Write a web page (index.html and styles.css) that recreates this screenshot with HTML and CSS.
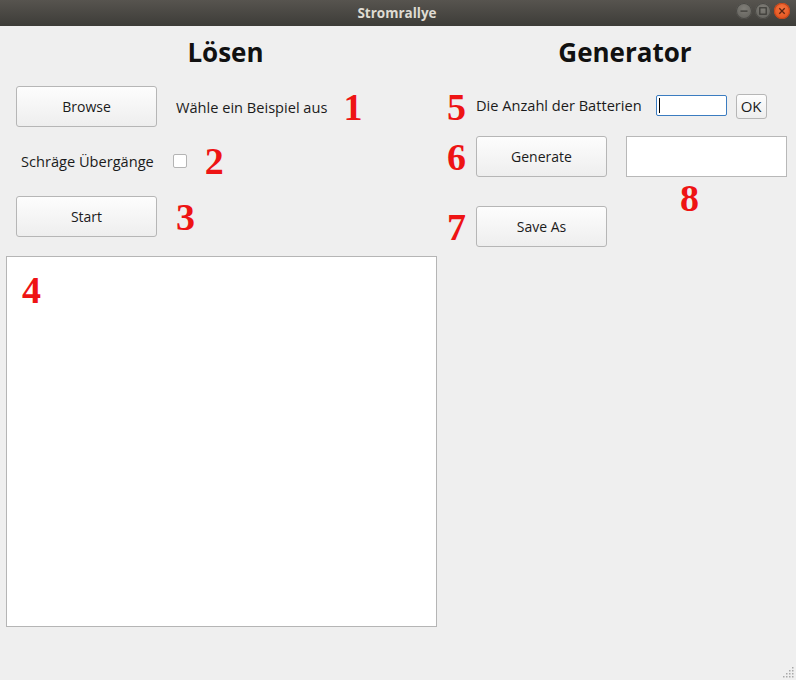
FILE: index.html
```html
<!DOCTYPE html>
<html lang="de">
<head>
<meta charset="utf-8">
<title>Stromrallye</title>
<link rel="stylesheet" href="styles.css">
</head>
<body>
<div class="window">
  <header class="titlebar">
    <span class="title">Stromrallye</span>
    <div class="winbtns">
      <span class="wbtn wmin"><svg width="16" height="16" viewBox="0 0 16 16"><rect x="4.5" y="7.5" width="7" height="1.2" fill="#3b3a36"/></svg></span>
      <span class="wbtn wmax"><svg width="16" height="16" viewBox="0 0 16 16"><rect x="4.8" y="4.8" width="6.4" height="6.4" fill="none" stroke="#3b3a36" stroke-width="1.2"/></svg></span>
      <span class="wbtn wclose"><svg width="16" height="16" viewBox="0 0 16 16"><path d="M5.3 5.3 L10.7 10.7 M10.7 5.3 L5.3 10.7" stroke="#5a2412" stroke-width="1.3"/></svg></span>
    </div>
  </header>
  <main class="content">
    <section class="col left">
      <h1 class="heading">Lösen</h1>
      <div class="row r1">
        <button class="btn wide">Browse</button>
        <span class="label">Wähle ein Beispiel aus</span>
        <span class="num">1</span>
      </div>
      <div class="row r2">
        <span class="label">Schräge Übergänge</span>
        <span class="check"></span>
        <span class="num">2</span>
      </div>
      <div class="row r3">
        <button class="btn wide">Start</button>
        <span class="num">3</span>
      </div>
      <div class="canvas"><span class="num">4</span></div>
    </section>
    <section class="col right">
      <h1 class="heading hr">Generator</h1>
      <div class="row r5">
        <span class="num">5</span>
        <span class="label">Die Anzahl der Batterien</span>
        <span class="input"><span class="caret"></span></span>
        <button class="btn ok">OK</button>
      </div>
      <div class="row r6">
        <span class="num">6</span>
        <button class="btn mid">Generate</button>
        <div class="outbox"><span class="num n8">8</span></div>
      </div>
      <div class="row r7">
        <span class="num">7</span>
        <button class="btn mid">Save As</button>
      </div>
    </section>
  </main>
  <svg class="grip" width="12" height="12" viewBox="0 0 12 12">
    <g fill="#a9a9a9">
      <rect x="9" y="0" width="1.5" height="1.5"/>
      <rect x="6" y="3" width="1.5" height="1.5"/><rect x="9" y="3" width="1.5" height="1.5"/>
      <rect x="3" y="6" width="1.5" height="1.5"/><rect x="6" y="6" width="1.5" height="1.5"/><rect x="9" y="6" width="1.5" height="1.5"/>
      <rect x="0" y="9" width="1.5" height="1.5"/><rect x="3" y="9" width="1.5" height="1.5"/><rect x="6" y="9" width="1.5" height="1.5"/><rect x="9" y="9" width="1.5" height="1.5"/>
    </g>
  </svg>
</div>
</body>
</html>
```

FILE: styles.css
```css
* { box-sizing: border-box; }
html, body { margin: 0; padding: 0; }
body {
  background: #efefef;
  font-family: "Open Sans", "DejaVu Sans", sans-serif;
  color: #1b1b1b;
}
.window {
  position: relative;
  width: 796px;
  height: 680px;
  display: flex;
  flex-direction: column;
  background: #efefef;
  overflow: hidden;
}
.titlebar {
  position: relative;
  height: 26px;
  flex: none;
  background: linear-gradient(#57544f, #3d3c38);
  display: flex;
  align-items: center;
  justify-content: center;
}
.title {
  color: #dfdbd2;
  font-weight: 700;
  font-size: 13.5px;
  line-height: 22px;
  margin-left: -2px;
}
.winbtns {
  position: absolute;
  right: 6px;
  top: 3px;
  display: flex;
  gap: 3px;
}
.wbtn {
  width: 16px;
  height: 16px;
  border-radius: 50%;
  display: block;
  background: radial-gradient(circle at 50% 35%, #807e78, #5d5c57);
  box-shadow: inset 0 0 0 1px #4a4945;
}
.wbtn svg { display: block; }
.wclose {
  background: radial-gradient(circle at 50% 35%, #f4743f, #df4b16);
  box-shadow: inset 0 0 0 1px #c4461a;
}
.content {
  flex: 1;
  display: grid;
  grid-template-columns: 440px 1fr;
}
.col { display: flex; flex-direction: column; }
.heading {
  margin: 0;
  height: 52px;
  line-height: 52px;
  font-size: 26px;
  font-weight: 700;
  text-align: center;
  color: #111;
  padding-left: 11px;
}
.hr { padding-left: 14px; }
.row {
  display: flex;
  align-items: center;
  height: 41px;
}
.label { font-size: 14.6px; white-space: nowrap; }
.num {
  font-family: "Liberation Serif", "Times New Roman", serif;
  font-weight: 700;
  font-size: 38px;
  line-height: 38px;
  color: #ee1414;
}
.btn {
  font-family: "Open Sans", "DejaVu Sans", sans-serif;
  font-size: 14px;
  color: #1b1b1b;
  border: 1px solid #b6b6b6;
  border-radius: 3px;
  background: linear-gradient(#fdfdfd, #eeeeee);
  height: 41px;
  padding: 0;
  margin: 0;
}
.wide { width: 141px; }
.mid { width: 131px; }
.r1 { margin-top: 8px; padding-left: 16px; }
.r1 .label { margin-left: 19px; }
.r1 .num { margin-left: 16px; }
.r2 { margin-top: 14px; padding-left: 21px; height: 40px; }
.r2 .check {
  width: 14px; height: 14px;
  background: #fff;
  border: 1px solid #b4b4b4;
  border-radius: 2px;
  margin-left: 19px;
}
.r2 .num { margin-left: 18px; }
.r3 { margin-top: 15px; padding-left: 16px; }
.r3 .num { margin-left: 19px; }
.canvas {
  margin: 19px 0 0 6px;
  width: 431px;
  height: 371px;
  background: #fff;
  border: 1px solid #b5b5b5;
  padding: 14px 0 0 15px;
}
.canvas .num { display: block; }
.r5 { margin-top: 8px; padding-left: 7px; }
.r5 .label { margin-left: 10px; margin-top: -3px; }
.input {
  position: relative;
  width: 71px; height: 21px;
  margin-left: 14px;
  margin-top: -3px;
  background: #fff;
  border: 1px solid #3b7cc0;
  border-radius: 2px;
}
.caret {
  position: absolute;
  left: 2px; top: 2px;
  width: 1px; height: 15px;
  background: #000;
}
.ok {
  width: 31px; height: 25px;
  margin-left: 9px;
  font-size: 15px;
  line-height: 1;
}
.r6 { margin-top: 9px; padding-left: 7px; }
.r6 .btn { margin-left: 10px; }
.outbox {
  position: relative;
  width: 161px; height: 41px;
  margin-left: 19px;
  background: #fff;
  border: 1px solid #b8b8b8;
}
.n8 { position: absolute; left: 53px; top: 42px; }
.r7 { margin-top: 29px; padding-left: 7px; }
.r7 .btn { margin-left: 10px; }
.grip { position: absolute; right: 1px; bottom: 1px; }
```
